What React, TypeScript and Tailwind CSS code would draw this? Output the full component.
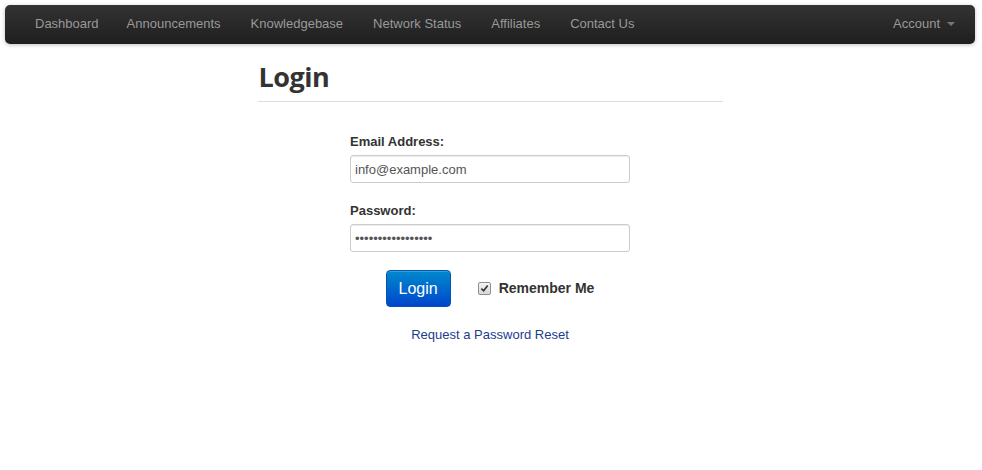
import { useState } from "react";

const navLinks = [
  "Dashboard",
  "Announcements",
  "Knowledgebase",
  "Network Status",
  "Affiliates",
  "Contact Us",
];

export default function App() {
  const [email, setEmail] = useState("info@example.com");
  const [password, setPassword] = useState("demo-password-123");
  const [remember, setRemember] = useState(true);

  return (
    <div className="min-h-[470px] bg-white font-['Liberation_Sans',Arial,sans-serif] text-[13px] text-[#333]">
      <div className="w-[980px]">
        <div className="px-[5px] pt-[5px]">
          <nav className="flex h-[39px] items-center rounded-[5px] bg-gradient-to-b from-[#333333] to-[#1f1f1f] pb-[2px] shadow-[0_1px_4px_rgba(0,0,0,0.25)]">
            <ul className="flex pl-[15px]">
              {navLinks.map((link, i) => (
                <li key={link}>
                  <a
                    href="#"
                    className={
                      i === 0
                        ? "block pl-[15px] pr-[13px] text-[13px] text-[#999] hover:text-white"
                        : "block px-[15px] text-[13px] text-[#999] hover:text-white"
                    }
                  >
                    {link}
                  </a>
                </li>
              ))}
            </ul>
            <a href="#" className="ml-auto mr-[15px] flex items-center gap-[7px] px-[5px] text-[13px] text-[#999]">
              Account
              <span className="mt-[1px] h-0 w-0 border-x-[4px] border-t-[4px] border-x-transparent border-t-[#777]" />
            </a>
          </nav>
        </div>

        <div className="mx-auto w-[465px]">
          <div className="mt-[15px] border-b border-[#ddd] pb-[6px]">
            <h1 className="pl-[1px] font-['Open_Sans',sans-serif] text-[27px] font-bold leading-[36px] tracking-[-0.5px] text-[#333]">
              Login
            </h1>
          </div>

          <form className="mx-auto mt-[31px] w-[280px]" onSubmit={(e) => e.preventDefault()}>
            <label htmlFor="email" className="block text-[13px] font-bold leading-[18px] text-[#333]">
              Email Address:
            </label>
            <input
              id="email"
              type="text"
              value={email}
              onChange={(e) => setEmail(e.target.value)}
              className="mt-[4px] h-[28px] w-[280px] rounded-[3px] border border-[#ccc] px-[4px] text-[13px] text-[#555] shadow-[inset_0_1px_1px_rgba(0,0,0,0.075)] outline-none"
            />

            <label htmlFor="password" className="mt-[19px] block text-[13px] font-bold leading-[18px] text-[#333]">
              Password:
            </label>
            <input
              id="password"
              type="password"
              value={password}
              onChange={(e) => setPassword(e.target.value)}
              className="mt-[4px] h-[28px] w-[280px] rounded-[3px] border border-[#ccc] px-[4px] text-[13px] text-[#555] shadow-[inset_0_1px_1px_rgba(0,0,0,0.075)] outline-none"
            />

            <div className="mt-[18px] flex items-center justify-center gap-[27px]">
              <button
                type="submit"
                className="h-[37px] w-[65px] rounded-[4px] border border-[#0055b3] bg-gradient-to-b from-[#0088cc] to-[#0044cc] text-[16px] text-white shadow-[inset_0_1px_0_rgba(255,255,255,0.2)]"
              >
                Login
              </button>
              <label className="flex cursor-pointer items-center gap-[8px] text-[14px] font-bold text-[#333]">
                <input
                  type="checkbox"
                  checked={remember}
                  onChange={(e) => setRemember(e.target.checked)}
                  className="sr-only"
                />
                <span className="flex h-[13px] w-[13px] items-center justify-center rounded-[2px] border border-[#8f8f8f] bg-gradient-to-b from-[#f4f4f4] to-[#d8d8d8]">
                  {remember && (
                    <svg viewBox="0 0 10 10" className="h-[9px] w-[9px]">
                      <path d="M1.5 5.2 L4 7.6 L8.6 1.8" fill="none" stroke="#333" strokeWidth="1.8" />
                    </svg>
                  )}
                </span>
                Remember Me
              </label>
            </div>

            <div className="mt-[18px] text-center">
              <a href="#" className="text-[13px] text-[#1c3c8c] hover:underline">
                Request a Password Reset
              </a>
            </div>
          </form>
        </div>
      </div>
    </div>
  );
}
